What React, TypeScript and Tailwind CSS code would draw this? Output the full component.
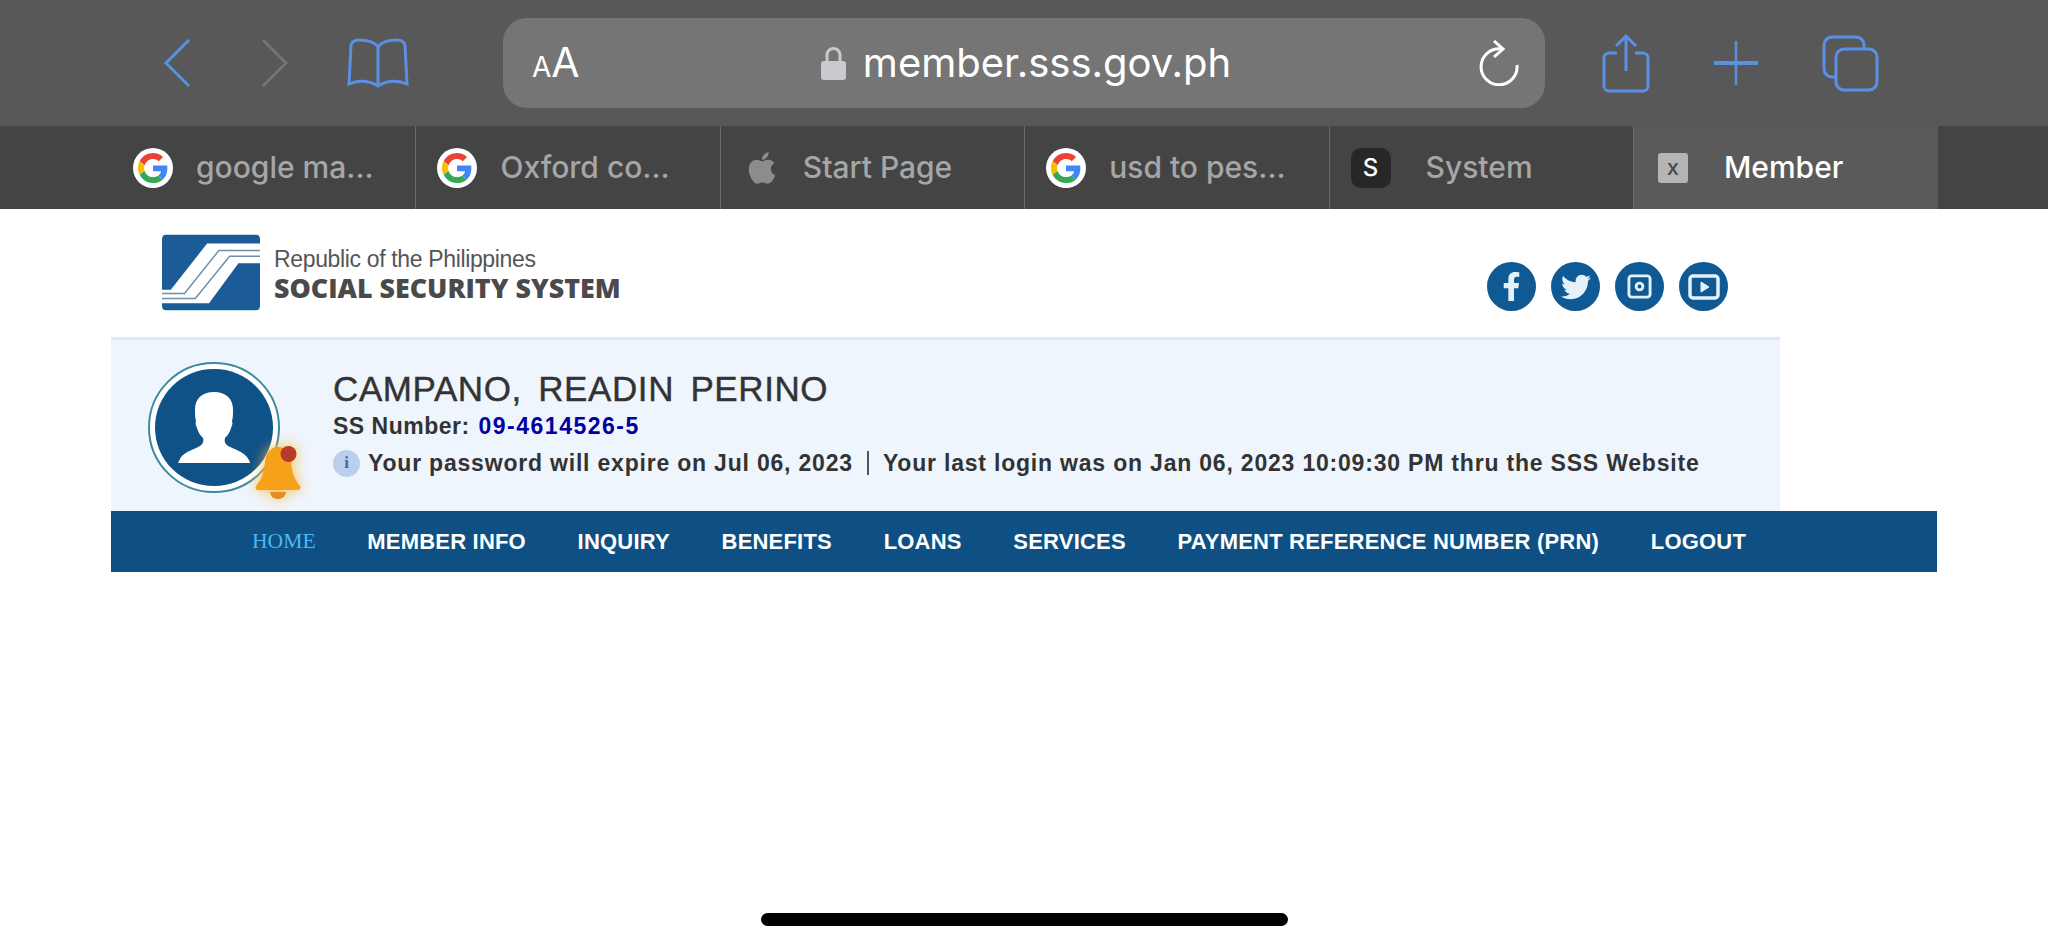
import { FaApple, FaFacebookF, FaTwitter } from 'react-icons/fa';

const sans = "font-['Liberation_Sans',Arial,sans-serif]";

const tabs = [
  { label: 'google ma...', icon: 'g' },
  { label: 'Oxford co...', icon: 'g' },
  { label: 'Start Page', icon: 'apple' },
  { label: 'usd to pes...', icon: 'g' },
  { label: 'System', icon: 's' },
];

const menu = ['MEMBER INFO', 'INQUIRY', 'BENEFITS', 'LOANS', 'SERVICES', 'PAYMENT REFERENCE NUMBER (PRN)', 'LOGOUT'];

function GoogleIcon() {
  return (
    <span className="flex h-[40px] w-[40px] shrink-0 items-center justify-center rounded-full bg-white">
      <svg viewBox="0 0 48 48" className="h-[30px] w-[30px]">
        <path fill="#EA4335" d="M24 9.5c3.5 0 6.7 1.2 9.2 3.6l6.9-6.9C35.9 2.4 30.5 0 24 0 14.6 0 6.5 5.4 2.6 13.2l8 6.2C12.5 13.7 17.8 9.5 24 9.5z" />
        <path fill="#4285F4" d="M47 24.5c0-1.6-.1-3.100-.4-4.500H24v9h13c-.6 3-2.300 5.500-4.800 7.200l7.700 6C44.400 38.500 47 32 47 24.500z" />
        <path fill="#FBBC05" d="M10.500 28.600c-.5-1.400-.8-3-.8-4.600s.3-3.200.8-4.600l-8-6.200C.9 16.500 0 20.100 0 24s.9 7.500 2.600 10.800l7.900-6.200z" />
        <path fill="#34A853" d="M24 48c6.500 0 11.900-2.100 15.900-5.800l-7.700-6c-2.100 1.400-4.900 2.300-8.200 2.300-6.200 0-11.500-4.200-13.400-9.900l-8 6.200C6.500 42.600 14.600 48 24 48z" />
      </svg>
    </span>
  );
}

function TabIcon({ kind }: { kind: string }) {
  if (kind === 'g') return <GoogleIcon />;
  if (kind === 'apple') return <FaApple className="ml-[2px] h-[36px] w-[36px] shrink-0 text-[#8c8c8c]" />;
  return (
    <span className="mr-[12px] flex h-[40px] w-[40px] shrink-0 items-center justify-center rounded-[10px] bg-[#272727] text-[24px] text-white">S</span>
  );
}

function SssLogo() {
  return (
    <svg viewBox="0 0 100 77" className="h-[77px] w-[98px] shrink-0 rounded-[5px] bg-white">
      <path fill="#1b5c98" d="M0 0H100V9H46L9 56H0z" />
      <path fill="#1b5c98" d="M100 29H78L48 70H0V77H100z" />
      <g fill="none" stroke="#6d8fb0" strokeWidth="1.5">
        <path d="M0 60H23L58 16H100" />
        <path d="M0 65H34L69 22H100" />
      </g>
    </svg>
  );
}

function Social({ children }: { children: React.ReactNode }) {
  return (
    <span className="flex h-[49px] w-[49px] items-center justify-center rounded-full bg-[#0f5a94] text-[#e6f0f8]">{children}</span>
  );
}

function Bell() {
  return (
    <svg viewBox="0 0 46 56" className="h-[56px] w-[46px] drop-shadow-[0_0_7px_rgba(250,190,70,1)]">
      <path fill="#f7a11a" d="M23 2c8 0 12 7 13 15 1 10 3 17 9 24 1 2 0 4-2 4H3c-2 0-3-2-2-4 6-7 8-14 9-24C11 9 15 2 23 2z" />
      <path fill="#e98a22" d="M15 47h16c-1 5-4 7-8 7s-7-2-8-7z" />
      <circle cx="33.500" cy="9" r="8" fill="#b93a2a" />
    </svg>
  );
}

export default function App() {
  return (
    <div className={`${sans} flex min-h-screen w-full flex-col bg-white`}>
      {/* safari toolbar */}
      <div className="flex h-[126px] items-center bg-[#585858] font-['Inter',sans-serif] text-[#5a8fe6]">
        <svg viewBox="0 0 28 48" className="ml-[163px] h-[48px] w-[28px] shrink-0" fill="none" stroke="currentColor" strokeWidth="3">
          <path d="M26 1L3 24l23 23" />
        </svg>
        <svg viewBox="0 0 28 48" className="ml-[70px] h-[48px] w-[28px] shrink-0 text-[#737373]" fill="none" stroke="currentColor" strokeWidth="3">
          <path d="M2 1l23 23L2 47" />
        </svg>
        <svg viewBox="0 0 62 50" className="ml-[58px] h-[50px] w-[62px] shrink-0" fill="none" stroke="currentColor" strokeWidth="3">
          <path d="M31 9C27 3 20 2 12 2 8 2 5 3 4 7L2 46c8-4 20-4 29 2 9-6 21-6 29-2L58 7c-1-4-4-5-8-5-8 0-15 1-19 7zM31 9v38" />
        </svg>
        <div className="relative ml-[94px] flex h-[90px] w-[1042px] shrink-0 items-center justify-center rounded-[24px] bg-[#757575] text-white">
          <span className="absolute left-[29px] top-[24px] flex items-baseline leading-none">
            <span className="text-[28px]">A</span>
            <span className="text-[41px]">A</span>
          </span>
          <span className="ml-[4px] flex items-center gap-[17px]">
            <svg viewBox="0 0 25 33" className="h-[33px] w-[25px] shrink-0">
              <path d="M6 15V8a6.500 6.500 0 0 1 13 0v7" fill="none" stroke="#c9c9ce" strokeWidth="3" />
              <rect y="14" width="25" height="19" rx="3" fill="#c9c9ce" />
            </svg>
            <span className="text-[40px] leading-none">member.sss.gov.ph</span>
          </span>
          <svg viewBox="0 0 42 46" className="absolute left-[975px] top-[22px] h-[46px] w-[42px]" fill="none" stroke="#fff" strokeWidth="3">
            <path d="M24 9A18 18 0 1 0 39 25" />
            <path d="M16 1l9 8-9 8" />
          </svg>
        </div>
        <svg viewBox="0 0 48 60" className="ml-[57px] h-[60px] w-[48px] shrink-0" fill="none" stroke="currentColor" strokeWidth="3">
          <path d="M15 20H7a5 5 0 0 0-5 5v28a5 5 0 0 0 5 5h34a5 5 0 0 0 5-5V25a5 5 0 0 0-5-5h-8" />
          <path d="M24 38V3M14 13L24 3l10 10" />
        </svg>
        <svg viewBox="0 0 44 44" className="ml-[64px] h-[44px] w-[44px] shrink-0" fill="none" stroke="currentColor">
          <path strokeWidth="2.500" d="M22 0V44" />
          <path strokeWidth="4" d="M0 22H44" />
        </svg>
        <svg viewBox="0 0 57 57" className="ml-[64px] h-[57px] w-[57px] shrink-0" fill="none" stroke="currentColor" strokeWidth="3">
          <path d="M14 42H10a8 8 0 0 1-8-8V10a8 8 0 0 1 8-8h24a8 8 0 0 1 8 8v4" />
          <rect x="14" y="14" width="41" height="41" rx="8" />
        </svg>
      </div>

      {/* tab bar */}
      <div className="flex h-[83px] bg-[#444444] pl-[112px] font-['Inter',sans-serif] text-[30px] font-medium text-[#a6a6a6]">
        {tabs.map((tab) => (
          <div key={tab.label} className="flex w-[304.400px] items-center gap-[23px] border-r border-[#6b6b6b] pl-[21px]">
            <TabIcon kind={tab.icon} />
            <span className="whitespace-nowrap">{tab.label}</span>
          </div>
        ))}
        <div className="flex w-[304px] items-center gap-[36px] bg-[#5a5a5a] pl-[24px] text-white">
          <span className="flex h-[30px] w-[30px] shrink-0 items-center justify-center rounded-[3px] bg-[#b5b5b5] text-[22px] text-[#4a4a4a]">x</span>
          <span>Member</span>
        </div>
      </div>

      {/* sss header */}
      <div className="ml-[111px] flex h-[128px] w-[1669px] items-start justify-between pl-[51px] pr-[52px] pt-[25px]">
        <div className="flex items-center gap-[14px]">
          <SssLogo />
          <div className="flex flex-col pt-[5px]">
            <span className="text-[23px] leading-[26px] tracking-[-0.35px] text-[#555555]">Republic of the Philippines</span>
            <span className="font-['Open_Sans',sans-serif] text-[26.800px] font-extrabold leading-[32px] text-[#4a4a4a]">SOCIAL SECURITY SYSTEM</span>
          </div>
        </div>
        <div className="flex gap-[15px] pt-[28px]">
          <Social><FaFacebookF className="h-[29px] w-[29px]" /></Social>
          <Social><FaTwitter className="h-[30px] w-[30px]" /></Social>
          <Social>
            <svg viewBox="0 0 26 26" className="h-[25px] w-[25px]" fill="none" stroke="currentColor" strokeWidth="3">
              <rect x="2" y="2" width="22" height="22" rx="3" />
              <circle cx="13" cy="13" r="3.500" />
            </svg>
          </Social>
          <Social>
            <svg viewBox="0 0 32 26" className="h-[26px] w-[32px]" fill="none" stroke="currentColor" strokeWidth="3.500">
              <rect x="2" y="2" width="28" height="22" rx="3" />
              <path d="M13 8l8 5-8 5z" fill="currentColor" strokeWidth="1" />
            </svg>
          </Social>
        </div>
      </div>

      {/* member panel */}
      <div className="ml-[111px] flex h-[174px] w-[1669px] items-start border-t-[3px] border-[#e3e7f1] bg-[#eff5fd] pl-[37px]">
        <div className="relative mt-[22px] h-[131px] w-[132px] shrink-0 rounded-full border-[2px] border-[#3d8a9e] bg-white p-[5px]">
          <div className="flex h-full w-full items-center justify-center overflow-hidden rounded-full bg-[#0f5287]">
            <svg viewBox="0 0 72 71" className="h-[71px] w-[72px]">
              <path fill="#fff" d="M36 0c12 0 19 7 19 17 0 5 0 9-1 12 1 2 0 5-1 7-1 4-3 7-6 10-1 3 0 6 3 8 6 3 14 5 19 11 1 2 3 4 3 6H0c1-2 2-4 3-6 5-6 14-8 19-11 3-2 4-5 3-8-3-3-5-6-6-10-1-2-2-5-1-7-1-3-1-7-1-12C17 7 24 0 36 0z" />
            </svg>
          </div>
          <div className="absolute left-[105px] top-[81px]"><Bell /></div>
        </div>
        <div className="ml-[53px] pt-[29px]">
          <div className="text-[35px] leading-[40px] tracking-[0.6px] text-[#333333] [-webkit-text-stroke:0.4px_#333333] [word-spacing:6px]">CAMPANO, READIN PERINO</div>
          <div className="mt-[3px] text-[23px] font-bold leading-[28px] tracking-[0.5px] text-[#333333]">
            SS Number: <span className="ml-[2px] tracking-[1.5px] text-[#0000a0]">09-4614526-5</span>
          </div>
          <div className="mt-[9px] flex items-center gap-[8px] text-[23px] font-bold leading-[28px] tracking-[0.8px] text-[#333333]">
            <span className="flex h-[27px] w-[27px] items-center justify-center rounded-full bg-[#b8d0ee] font-['Liberation_Serif',serif] text-[17px] tracking-normal text-[#4b6a8c]">i</span>
            <span>Your password will expire on Jul 06, 2023</span>
            <span className="mx-[6px] h-[24px] w-[2px] bg-[#555555]" />
            <span>Your last login was on Jan 06, 2023 10:09:30 PM thru the SSS Website</span>
          </div>
        </div>
      </div>

      {/* nav */}
      <nav className="ml-[111px] flex h-[61px] w-[1826px] items-center gap-[51.700px] bg-[#0e5083] pl-[141px] text-[22px] font-bold tracking-[0.2px] text-white">
        <span className="font-['Liberation_Serif',serif] text-[21.600px] font-normal tracking-normal text-[#4db8f0]">HOME</span>
        {menu.map((item) => (
          <span key={item} className="whitespace-nowrap">{item}</span>
        ))}
      </nav>

      <div className="flex flex-1 items-end justify-center pb-[20px]">
        <div className="h-[13px] w-[527px] rounded-full bg-black" />
      </div>
    </div>
  );
}
